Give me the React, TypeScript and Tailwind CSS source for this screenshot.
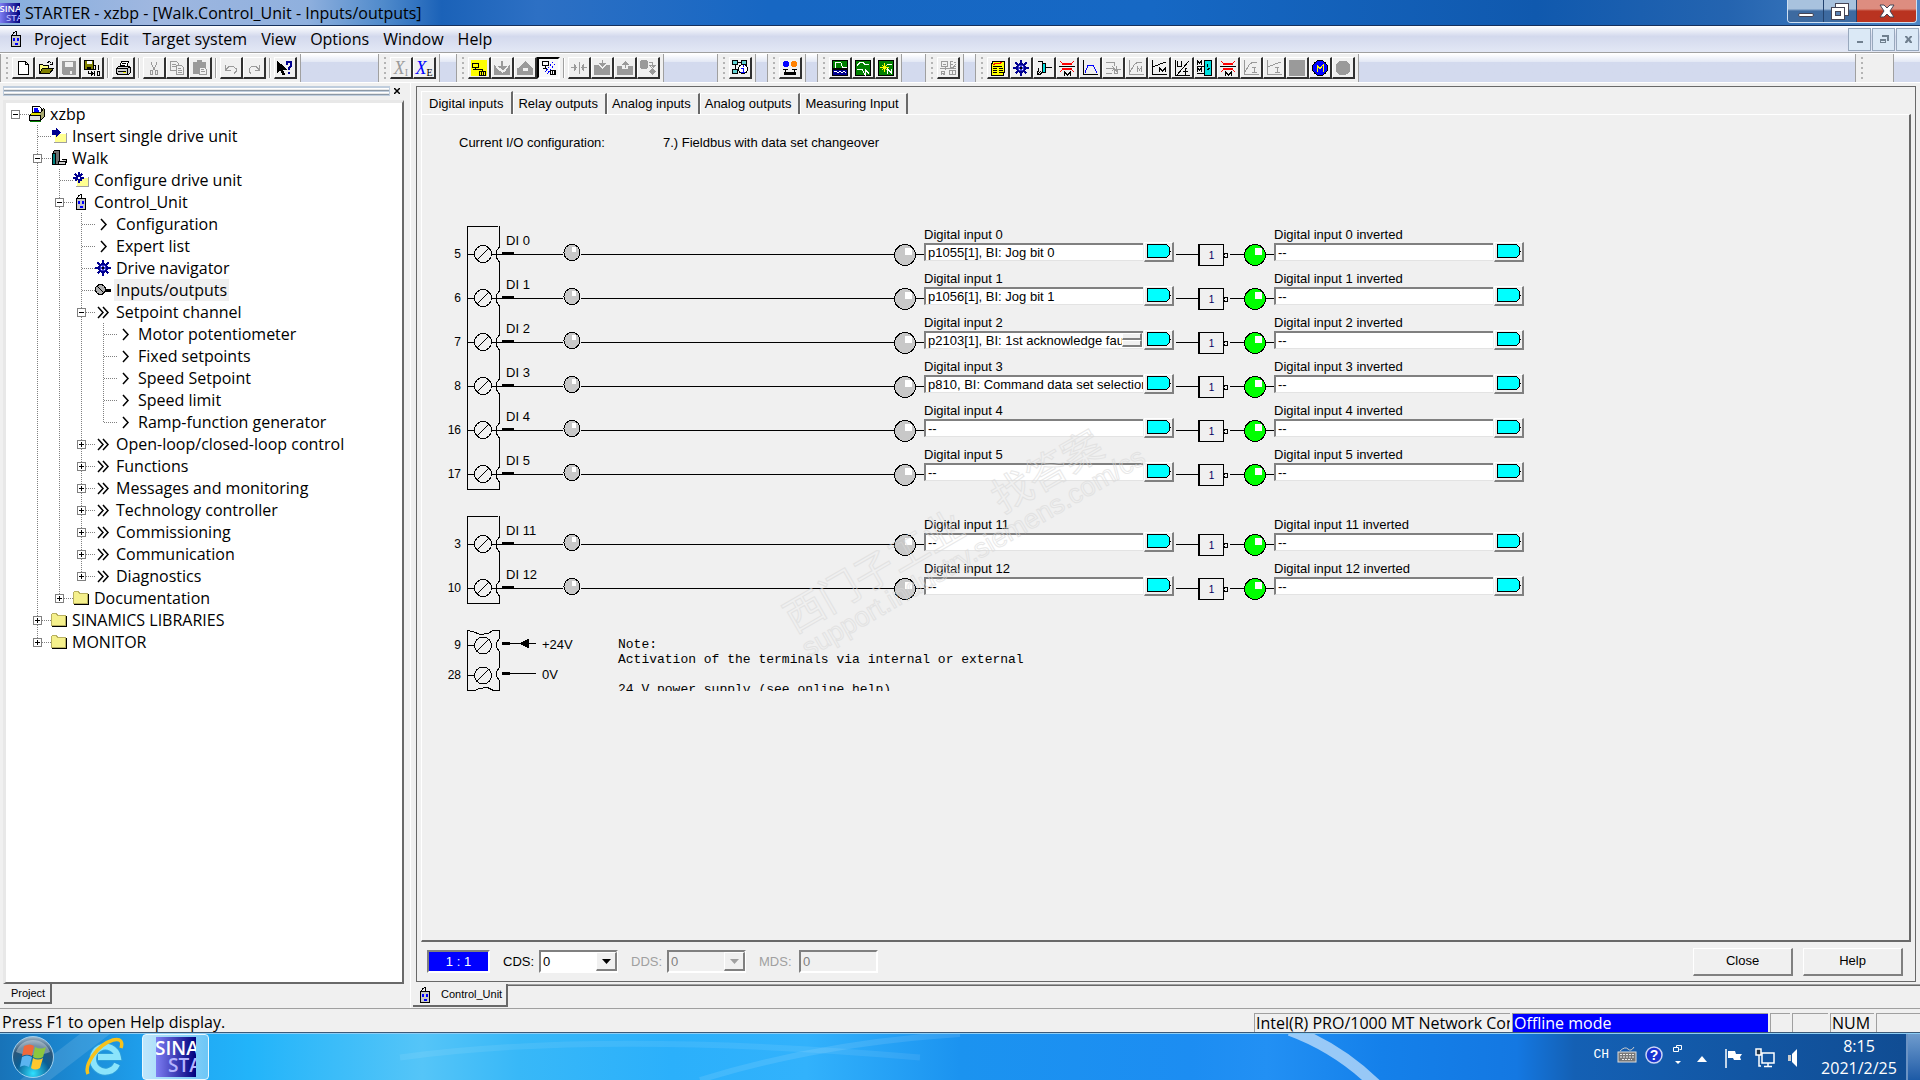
import React from 'react';

type IconProps = { children: React.ReactNode; className?: string };

const Icon: React.FC<IconProps> = ({ children, className = 'w-4 h-4' }) => (
  <svg className={`${className} shrink-0`} viewBox="0 0 16 16" fill="none" stroke="#000" strokeWidth="1" shapeRendering="crispEdges" aria-hidden="true">
    {children}
  </svg>
);

const G = '#9a9a9a';

const icons: Record<string, React.ReactNode> = {
  new: <path d="M3.500 1.500h7l3 3v10h-10zM10.500 1.500v3h3" fill="#fff" />,
  open: (
    <>
      <path d="M1.500 13.500v-9h3l1 1h5v3" fill="#ffff80" />
      <path d="M1.500 13.500l3-5h11l-4 5z" fill="#808000" />
      <path d="M9.500 2.500l2-1 2 2M14.500 1.500v3h-3" />
    </>
  ),
  save: (
    <>
      <path d="M1.500 1.500h13v13h-12l-1-1z" fill={G} stroke={G} />
      <path d="M4 2h8v5H4zM9 11h2v3H9z" fill="#f0f0f0" stroke="none" />
    </>
  ),
  saveBin: (
    <>
      <path d="M.5.500h9v9h-9z" fill="#808000" />
      <path d="M3 1h5v3H3z" fill="#fff" stroke="none" />
      <path d="M3 7h4v2H3z" fill="#000" stroke="none" />
      <path d="M9.500 5.500h2v4h-2zM14.500 5v5M4.500 11v2h4M7 11.500l2 2-2 2M10.500 11v5M13.500 11.500h2v4h-2z" />
    </>
  ),
  print: (
    <>
      <path d="M4.500 7.500l2-6h7l-2 6z" fill="#fff" />
      <path d="M1.500 8.500l2-2h10l2 1v5l-2 2h-11l-1-2z" fill="#d0d0d0" />
      <path d="M1.500 8.500h11l2-2M12.500 8.500v5M3 11.500h8M7 3.500h4M6 5.500h4" />
      <path d="M8 12h3v1H8z" fill="#ee0" stroke="none" />
    </>
  ),
  cut: <path d="M5.500 1.500v3l4 6M10.500 1.500v3l-4 6M4.500 10.500h2v4h-2zM9.500 10.500h2v4h-2z" stroke={G} />,
  copy: (
    <>
      <path d="M1.500 1.500h6l2 2v7h-8zM3 4.500h4M3 6.500h5" stroke={G} />
      <path d="M7.500 5.500h5l2 2v7h-7zM9 8.500h3M9 10.500h4M9 12.500h4" stroke={G} fill="#f0f0f0" />
    </>
  ),
  paste: (
    <>
      <path d="M1.500 2.500h12v11h-12zM5.500.500h4v2h-4z" stroke={G} fill={G} />
      <path d="M7.500 7.500h5l2 2v5h-7zM9 9.500h3M9 11.500h4" stroke={G} fill="#f0f0f0" />
    </>
  ),
  undo: <path d="M2.500 5v5h5M3 9.500l3-3h4l3 2v3l-2 2" stroke={G} />,
  redo: <path d="M13.500 5v5h-5M13 9.500l-3-3h-4l-3 2v3l2 2" stroke={G} />,
  whats: (
    <>
      <path d="M.5 1.500v11l3-3 2 5h2l-2-5h4z" fill="#000" />
      <path d="M10 5V2h4v4l-2 2v2M12 12v2" stroke="#000090" strokeWidth="2" />
    </>
  ),
  yellowNet: (
    <>
      <path d="M0 0h16v16H0z" fill="#ff0" stroke="none" />
      <path d="M1.500 3.500h6v4h-6zM4.500 8v2M2 9.500h9v2M8.500 11.500h6v4h-6zM10.500 11v5M12.500 11v5" />
    </>
  ),
  down: <path d="M.5 6v8.500h15v-9l-4 6-3 2-4-3zM7.500 1v5M8.500 1v5M5 6.500h7l-3 3z" stroke={G} fill={G} />,
  up: <path d="M.5 8v6.500h15v-6.500M2.500 7.500l6-6 6 6h-3v4h-6v-4z" stroke={G} fill={G} />,
  netSlash: (
    <>
      <path d="M1.500 1.500h6v4h-6zM4.500 6v2M2 8.500h4M9.500 10.500h5v4h-5zM11.500 10v5M13.500 10v5" />
      <path d="M12 2l-8 10M14 4l-8 10" stroke="#00f" strokeDasharray="2 1" />
    </>
  ),
  merge: <path d="M8 2v12M0 7.500h6M10 7.500h6M3.500 5l2 2.500-2 2.500zM12.500 5l-2 2.500 2 2.500z" stroke={G} fill={G} />,
  boxDown: <path d="M.5 5.500h4l4 4 4-4h3v9h-15zM8 0v5M5.500 3.500h6l-3 3z" stroke={G} fill={G} />,
  boxUp: <path d="M.5 6.500h4v3h7v-3h4v8h-15zM8 8V2M5.500 4.500h6l-3-3z" stroke={G} fill={G} />,
  transfer: (
    <>
      <path d="M1.500.500h5l1 1v6l-1 1h-5l-1-1v-6zM12.500 8.500l3 3-3 3-3-3z" stroke={G} fill={G} />
      <path d="M9 2.500h3.500v4M10 5.500h5l-2.500 3z" stroke={G} fill="none" />
    </>
  ),
  info: (
    <>
      <path d="M.5.500h5v4h-5zM9.500.500h5v4h-5zM.5 9.500h5v4h-5zM3.500 5v4M6 2.500h3" fill="#60d0d0" />
      <circle cx="11" cy="9" r="4.500" fill="#fff" />
      <path d="M11 5v2M9 8.500h3M11 8v4M9 12.500h4" stroke="#00f" />
    </>
  ),
  users: (
    <>
      <circle cx="4" cy="4" r="3" fill="#00f" stroke="none" />
      <circle cx="12" cy="4" r="3" fill="#ff8000" stroke="none" />
      <path d="M1 9.500h5M10 9.500h5M3.500 9v3M12.500 9v3" />
      <path d="M2 12h12v3H2z" fill="#000" stroke="none" />
    </>
  ),
  scope1: (
    <>
      <path d="M.5.500h15v8h-15z" fill="#008000" />
      <path d="M.5 9.500h15v6h-15z" fill="#000090" />
      <path d="M3.500 8v-5l2-1h3l2 5h4M2 12l2-1 2 2 2-2 2 2 2-2 2 2" stroke="#fff" />
    </>
  ),
  scope2: (
    <>
      <path d="M.5.500h15v15h-15z" fill="#008000" />
      <path d="M2 5.500l3-3h3l2 2h4M2 9.500h5l3 5v-5l4 4" stroke="#fff" />
    </>
  ),
  scope3: (
    <>
      <path d="M.5.500h15v15h-15z" fill="#008000" />
      <path d="M2 7.500h9M6.500 3v9M4 5l6 6M10 4l-6 6" stroke="#ff0" />
      <path d="M9.500 14v-5l4 4v-4M9 4h5" stroke="#fff" />
    </>
  ),
  device: (
    <path d="M1.500 1.500h6v5h-6zM3 4h3M10 1.500h3M10.500 2v5h3M10 4.500h3M14 2h2v2l-2 2h2M0 8.500h16M5 7v3M1.500 15v-4h3v2h-3l3 2M9.500 10.500h6v4h-6zM12.500 10v5" stroke={G} />
  ),
  list: (
    <>
      <path d="M1.500 3.500h12v12h-12z" fill="#ff0" />
      <path d="M2.500 3v-2h12v12" fill="#ff0" />
      <path d="M3 6.500h9M3 8.500h4M9 8.500h4M3 10.500h4M9 10.500h4M3 12.500h4M9 12.500h4" />
      <path d="M3 5l3-2 3 1 3-2" stroke="#f00" />
    </>
  ),
  wheel: (
    <>
      <path d="M8 0v16M0 8h16M2.500 2.500l11 11M13.500 2.500l-11 11" stroke="#000090" strokeWidth="2" />
      <circle cx="8" cy="8" r="4" fill="#3838d0" stroke="#000090" strokeWidth="2" />
      <path d="M6 6h1v1H6zM9 6h1v1H9zM6 9h1v1H6zM9 9h1v1H9z" fill="#fff" stroke="none" />
      <circle cx="8" cy="8" r="1" fill="#000" stroke="none" />
    </>
  ),
  loop: (
    <>
      <path d="M6.500 3.500h3v9h-3z" fill="#00e0e0" />
      <path d="M9 7.500h7M2 1.500h4v2M6.500 12l-3 3M1 15l4-4M1.500 11v3h3M2.500 8v4" />
    </>
  ),
  limit: (
    <>
      <path d="M3 4h10M3 9h10" stroke="#f00" strokeWidth="2" />
      <path d="M1 1l2 2M15 1l-2 2M1 12l2-2M15 12l-2-2" stroke="#f00" />
      <path d="M0 6.500h16M5.500 16v-4l3 3 3-3v4" />
    </>
  ),
  curve: (
    <>
      <path d="M1.500 0v14.500H16" />
      <path d="M3 12.500l3-7h5l4 7" stroke="#00f" />
    </>
  ),
  setp: <path d="M1 2.500h8v3M1 8.500h8M7 6l2 2.500-2 2.500M11 6v6M9 9.500h7M1 13.500h6M9.500 10.500h3v3h-3z" stroke={G} />,
  rampM: <path d="M1.500 0v14.500H16M2 12l4-7 4-3h4M9.500 12v-5l2 3 2-3v5" stroke={G} />,
  lineM: <path d="M1.500 0v14.500H16M2 7l7-3 6-2M8.500 12v-4l3 3 3-3v4" />,
  uf: <path d="M1.500 0v15.500H16M3.500 1v5h4v-5M3 15L15 1M13 8.500h-2v7M9 11.500h5" />,
  motor: (
    <>
      <path d="M7.500.500h7v15h-7z" fill="#00e0e0" />
      <path d="M0 6.500h7M0 13.500h7M.5 5v-4l2 2 2-2v4M.5 12v-4l2 2 2-2v4M10.500 4v3M10 10l3-2" />
    </>
  ),
  rampI: <path d="M1.500 0v14.500H16M2 12l4-7 4-3h4M9 7.500h4M11.500 7v5M9 12.500h5" stroke={G} />,
  lineI: <path d="M1.500 0v14.500H16M2 7l7-3 6-2M9 7.500h4M11.500 7v5M9 12.500h5" stroke={G} />,
  stop: <path d="M0 0h16v16H0z" fill={G} stroke="none" />,
  motorM: (
    <>
      <circle cx="8" cy="8" r="7.500" fill="#00f" />
      <path d="M5 12V5l3 4 3-4v7" stroke="#ff0" />
    </>
  ),
  dot: <circle cx="8" cy="8" r="7.500" fill={G} stroke="none" />,
  // tree
  unit: (
    <>
      <path d="M3.500 4.500h9v11h-9z" fill="#c8c8c8" />
      <path d="M4.500 4l1-2 3-2v4" />
      <path d="M5 7h2v3H5zM9 7h2v3H9zM7 12h3v2H7z" fill="#00f" stroke="none" />
    </>
  ),
  project: (
    <>
      <path d="M3.500.500h7l2 2v5h-9z" fill="#fff" />
      <path d="M5 2.500h4M5 4.500h5" stroke="#00f" strokeWidth="2" />
      <path d="M.5 9.500l3-3h8l3-4 1 1v7l-4 4h-11z" fill="#a8a870" />
      <path d="M.5 9.500h11v5h-11z" fill="#e0e0e0" />
      <path d="M2 7h9v2H2z" fill="#dd0" stroke="none" />
      <path d="M1 15.500h11" stroke="#008000" />
    </>
  ),
  insert: (
    <>
      <path d="M4 6h11v8H4z" fill="#ffff90" stroke="none" />
      <path d="M3 14.500h13M15.500 5v10" stroke="#a0a0a0" />
      <path d="M1 2h4V0l5 4.500L5 9V7H1z" fill="#000090" stroke="none" />
    </>
  ),
  walk: (
    <>
      <path d="M1.500 3.500l2-3h5v12l-2 2h-5z" fill="#707070" />
      <path d="M1.500 3.500h3v11h-3z" fill="#008080" />
      <path d="M7.500 11.500h7v3h-7zM10.500 9.500h5v3" fill="#d0d0d0" />
    </>
  ),
  configure: (
    <>
      <path d="M4 6h11v8H4z" fill="#ffff90" stroke="none" />
      <path d="M3 14.500h13M15.500 5v10" stroke="#a0a0a0" />
      <path d="M5.500 0v11M0 5.500h11M2 2l7 7M9 2l-7 7" stroke="#000090" strokeWidth="2" />
      <path d="M5 5h1v1H5z" fill="#fff" stroke="#fff" />
    </>
  ),
  io: (
    <>
      <circle cx="5.500" cy="7.500" r="5" fill="#b0b0b0" />
      <path d="M2 4l7 7" stroke="#000" />
      <path d="M11 8h5" strokeWidth="3" />
    </>
  ),
  chev: <path d="M6 3l5 5.500L6 14" strokeWidth="1.500" shapeRendering="auto" />,
  chev2: <path d="M3 3l5 5.500L3 14M8 3l5 5.500L8 14" strokeWidth="1.500" shapeRendering="auto" />,
  folder: (
    <>
      <path d="M.5 13.500v-11l1-1h4l1 2h8v10z" fill="#f5f08c" stroke="#b8b060" />
      <path d="M1 14.500h15M15.500 4v11" stroke="#000" />
    </>
  ),
};

/* ---------- title + menu ---------- */

const StarterLogo: React.FC<{ className: string }> = ({ className }) => (
  <svg className={className} viewBox="0 0 40 40" aria-hidden="true">
    <defs>
      <linearGradient id="logo" x1="0" x2="1">
        <stop offset="0" stopColor="#7d7df2" />
        <stop offset="1" stopColor="#00007c" />
      </linearGradient>
    </defs>
    <rect width="40" height="40" fill="url(#logo)" />
    <text x="-1" y="18" fontFamily="Open Sans, sans-serif" fontSize="19" fontWeight="600" fill="#fff">SINA</text>
    <text x="12" y="35" fontFamily="Open Sans, sans-serif" fontSize="19" fontWeight="600" fill="#b4b4ff">STA</text>
  </svg>
);

const TitleBar: React.FC = () => (
  <header className="flex h-[26px] shrink-0 justify-between overflow-hidden border-b border-[#16305c] bg-[linear-gradient(90deg,#86aede_0%,#9fb7e0_8%,#8fb0de_16%,#4f8acb_20%,#1b62b8_23%,#2d70c4_28%,#1767c3_40%,#1668c4_60%,#1059ae_80%,#2464b0_90%,#4d86c6_100%)]">
    <div className="flex items-center gap-[5px] pr-2">
      <StarterLogo className="h-5 w-5" />
      <h1 className="text-base font-normal whitespace-nowrap text-black">STARTER - xzbp - [Walk.Control_Unit - Inputs/outputs]</h1>
    </div>
    <div className="mr-[3px] flex h-[23px] overflow-hidden rounded-b border border-t-0 border-[#cfe0f2]">
      <button aria-label="Minimize" className="flex w-9 items-center justify-center border-r border-[#22426e] bg-linear-to-b from-[#a8c2de] from-40% to-[#3d6aa0] to-50%">
        <span className="mt-2 h-1 w-4 rounded-sm border border-[#445] bg-white" />
      </button>
      <button aria-label="Restore" className="flex w-[33px] items-center justify-center border-r border-[#22426e] bg-linear-to-b from-[#a8c2de] from-40% to-[#3d6aa0] to-50%">
        <svg className="h-[17px] w-[18px]" viewBox="0 0 18 17" shapeRendering="crispEdges" aria-hidden="true">
          <path d="M4.500.500h13v12h-13z" fill="#fff" stroke="#445" />
          <path d="M.5 4.500h13v12H.5z" fill="#fff" stroke="#445" />
          <path d="M4.500 8.500h5v4h-5z" fill="#5b83b4" stroke="#445" />
        </svg>
      </button>
      <button aria-label="Close window" className="flex w-[59px] items-center justify-center bg-linear-to-b from-[#dd8d80] from-40% to-[#b93320] to-50%">
        <svg className="h-[14px] w-[16px]" viewBox="0 0 16 14" aria-hidden="true">
          <path d="M1 1h4l3 3 3-3h4l-4 6 4 6h-4l-3-3-3 3H1l4-6z" fill="#fff" stroke="#445" />
        </svg>
      </button>
    </div>
  </header>
);

const menus = ['Project', 'Edit', 'Target system', 'View', 'Options', 'Window', 'Help'];

const MenuBar: React.FC = () => (
  <div className="flex h-[27px] shrink-0 items-center justify-between border-b border-[#a0a0a0] bg-linear-to-b from-white via-[#d3d9ed] via-40% to-[#e3e8f5]">
    <nav className="flex items-center pl-2">
      <Icon className="mr-[3px] h-4 w-4">{icons.unit}</Icon>
      {menus.map((m) => (
        <button key={m} className="px-[7px] text-base leading-6">{m}</button>
      ))}
    </nav>
    <div className="mr-px flex gap-px">
      {[
        { name: 'Minimize document', d: 'M5 10h6v2H5z' },
        { name: 'Restore document', d: 'M6 4h7v6h-2V6H6zM4 8h6v4H4zM5 10v1h4v-1z' },
        { name: 'Close document', d: 'M5 5h2l1.500 2L10 5h2v1l-2 2 2 3v1h-2l-1.500-2L7 12H5v-1l2-3-2-2z' },
      ].map((b) => (
        <button key={b.name} aria-label={b.name} className="flex h-[23px] w-[23px] items-center justify-center border border-[#98a8bd] bg-[#dbe9f6]">
          <svg className="h-4 w-4" viewBox="0 0 16 16" fill="#70808f" fillRule="evenodd" aria-hidden="true">
            <path d={b.d} />
          </svg>
        </button>
      ))}
    </div>
  </div>
);

/* ---------- toolbar ---------- */

const Group: React.FC<{ items: string[]; className?: string }> = ({ items, className = '' }) => (
  <div className={`flex h-full shrink-0 items-center border-r border-l border-r-[#a0a0a0] border-l-[#a0a0a0] bg-[#f0f0f0] pr-[3px] pl-[5px] ${className}`}>
    <div className="mr-1 flex w-[2px] flex-col gap-[3px]">
      {[0, 1, 2, 3, 4].map((n) => (
        <span key={n} className="h-[2px] w-[2px] bg-[#b4b4b4]" />
      ))}
    </div>
    {items.map((name, i) =>
      name === '|' ? (
        <span key={i} className="mx-[3px] h-5 w-[2px] border-l border-[#a0a0a0] bg-white" />
      ) : (
        <button
          key={i}
          aria-label={name}
          className={
            name === 'netSlash'
              ? 'flex h-[22px] w-[23px] items-center justify-center border-2 border-t-black border-r-white border-b-white border-l-black bg-[#f8f8f8]'
              : 'flex h-[22px] w-[23px] items-center justify-center border-t border-r-2 border-b-2 border-l border-t-white border-r-[#303030] border-b-[#303030] border-l-white bg-[#f0f0f0]'
          }
        >
          {name === 'xi' || name === 'xe' ? (
            <span className={`font-['Liberation_Serif'] text-lg leading-4 italic ${name === 'xi' ? 'text-[#9a9a9a]' : 'text-[#0000ff]'}`}>
              X<sub className={`text-[10px] not-italic ${name === 'xi' ? 'text-[#9a9a9a]' : 'text-black'}`}>{name === 'xi' ? 'I' : 'E'}</sub>
            </span>
          ) : (
            <Icon>{icons[name]}</Icon>
          )}
        </button>
      )
    )}
  </div>
);

const Toolbar: React.FC = () => (
  <div className="flex h-[30px] shrink-0 overflow-hidden border-t border-b border-white bg-linear-to-b from-white from-0% via-[#e3e8f5] via-28% to-[#d3daee] to-30%">
    <Group items={['new', 'open', 'save', 'saveBin', '|', 'print', '|', 'cut', 'copy', 'paste', '|', 'undo', 'redo', '|', 'whats']} />
    <Group className="ml-[77px]" items={['xi', 'xe']} />
    <Group className="ml-4" items={['yellowNet', 'down', 'up', 'netSlash', '|', 'merge', 'boxDown', 'boxUp', 'transfer']} />
    <Group className="ml-[53px]" items={['info']} />
    <Group className="ml-[11px]" items={['users']} />
    <Group className="ml-[11px]" items={['scope1', 'scope2', 'scope3']} />
    <Group className="ml-[23px]" items={['device']} />
    <Group
      className="ml-[11px]"
      items={['list', 'wheel', 'loop', 'limit', 'curve', 'setp', 'rampM', 'lineM', 'uf', 'motor', 'limit', 'rampI', 'lineI', 'stop', 'motorM', 'dot']}
    />
    <Group className="mr-[26px] ml-auto w-[39px]" items={[]} />
  </div>
);

/* ---------- project tree ---------- */

interface TreeNode {
  level: number;
  label: string;
  icon: string;
  box?: '+' | '-';
  selected?: boolean;
}

const tree: TreeNode[] = [
  { level: 0, label: 'xzbp', icon: 'project', box: '-' },
  { level: 1, label: 'Insert single drive unit', icon: 'insert' },
  { level: 1, label: 'Walk', icon: 'walk', box: '-' },
  { level: 2, label: 'Configure drive unit', icon: 'configure' },
  { level: 2, label: 'Control_Unit', icon: 'unit', box: '-' },
  { level: 3, label: 'Configuration', icon: 'chev' },
  { level: 3, label: 'Expert list', icon: 'chev' },
  { level: 3, label: 'Drive navigator', icon: 'wheel' },
  { level: 3, label: 'Inputs/outputs', icon: 'io', selected: true },
  { level: 3, label: 'Setpoint channel', icon: 'chev2', box: '-' },
  { level: 4, label: 'Motor potentiometer', icon: 'chev' },
  { level: 4, label: 'Fixed setpoints', icon: 'chev' },
  { level: 4, label: 'Speed Setpoint', icon: 'chev' },
  { level: 4, label: 'Speed limit', icon: 'chev' },
  { level: 4, label: 'Ramp-function generator', icon: 'chev' },
  { level: 3, label: 'Open-loop/closed-loop control', icon: 'chev2', box: '+' },
  { level: 3, label: 'Functions', icon: 'chev2', box: '+' },
  { level: 3, label: 'Messages and monitoring', icon: 'chev2', box: '+' },
  { level: 3, label: 'Technology controller', icon: 'chev2', box: '+' },
  { level: 3, label: 'Commissioning', icon: 'chev2', box: '+' },
  { level: 3, label: 'Communication', icon: 'chev2', box: '+' },
  { level: 3, label: 'Diagnostics', icon: 'chev2', box: '+' },
  { level: 2, label: 'Documentation', icon: 'folder', box: '+' },
  { level: 1, label: 'SINAMICS LIBRARIES', icon: 'folder', box: '+' },
  { level: 1, label: 'MONITOR', icon: 'folder', box: '+' },
];

// true when another node of the same branch follows below this row
const continues = (row: number, level: number) => {
  for (let i = row + 1; i < tree.length; i++) {
    if (tree[i].level === level) return true;
    if (tree[i].level < level) return false;
  }
  return false;
};

const TreeRow: React.FC<{ node: TreeNode; row: number }> = ({ node, row }) => (
  <li className="flex h-[22px] items-center">
    {Array.from({ length: node.level + 1 }, (_, k) => {
      const own = k === node.level;
      const below = k > 0 && continues(row, k);
      return (
        <svg key={k} className="h-[22px] w-[22px] shrink-0 overflow-visible" viewBox="0 0 22 22" fill="none" stroke="#808080" shapeRendering="crispEdges" aria-hidden="true">
          {k > 0 && (own || below) && <path d={below ? 'M10.500 0v22' : 'M10.500 0v11'} strokeDasharray="1 1" />}
          {own && <path d="M11 11.500h13" strokeDasharray="1 1" />}
          {own && node.box && (
            <>
              <path d="M6.500 7.500h8v8h-8z" fill="#fff" />
              <path d={node.box === '+' ? 'M8 11.500h5M10.500 9v5' : 'M8 11.500h5'} stroke="#000" />
            </>
          )}
        </svg>
      );
    })}
    <Icon className="mr-[3px] ml-[2px] h-4 w-4">{icons[node.icon]}</Icon>
    <span className={`px-[2px] text-base leading-[22px] whitespace-nowrap ${node.selected ? 'bg-[#f0f0f0]' : ''}`}>{node.label}</span>
  </li>
);

const ProjectPanel: React.FC = () => (
  <aside className="mr-[6px] ml-[3px] flex w-[401px] shrink-0 flex-col pt-[3px] pb-1">
    <div className="flex h-[10px] items-center bg-[#f0f0f0]">
      <div className="flex h-full flex-1 flex-col justify-center gap-px bg-[#bfcddd] px-px">
        <span className="h-[3px] border-t border-b border-t-white border-b-[#8d99a6] bg-[#e8e8e8]" />
        <span className="h-[3px] border-t border-b border-t-white border-b-[#8d99a6] bg-[#e8e8e8]" />
      </div>
      <button aria-label="Close project panel" className="flex w-[14px] justify-center">
        <svg className="h-[6px] w-[6px]" viewBox="0 0 6 6" stroke="#000" strokeWidth="1.500" aria-hidden="true">
          <path d="M0 0l6 6M6 0L0 6" />
        </svg>
      </button>
    </div>
    <div className="mt-1 flex-1 border-t-[3px] border-r-2 border-b-2 border-l-[3px] border-t-[#e8e8e8] border-r-[#696969] border-b-[#696969] border-l-[#e8e8e8] bg-white text-black">
      <ul className="-ml-px">
        {tree.map((node, i) => (
          <TreeRow key={node.label} node={node} row={i} />
        ))}
      </ul>
    </div>
    <button className="ml-px h-5 w-12 border-r-2 border-b-2 border-[#696969] pl-[2px] font-['Liberation_Sans'] text-[11px]">Project</button>
  </aside>
);

/* ---------- I/O diagram ---------- */

const BTN = 'border-t border-l border-r-2 border-b-2 border-t-white border-l-white border-r-[#808080] border-b-[#808080] bg-[#f0f0f0]';

const Lamp: React.FC<{ color: string; small?: boolean }> = ({ color, small }) =>
  small ? (
    <svg className="h-11 w-[18px] shrink-0" viewBox="0 0 18 44" shapeRendering="crispEdges" aria-hidden="true">
      <circle cx="9" cy="26.500" r="8" fill={color} stroke="#000" />
      <path d="M9 21h4v5H9z" fill="#fff" />
    </svg>
  ) : (
    <svg className="h-11 w-[22px] shrink-0" viewBox="0 0 22 44" shapeRendering="crispEdges" aria-hidden="true">
      <circle cx="11" cy="29" r="10.500" fill={color} stroke="#000" />
      <path d="M11 22h7v7h-7z" fill="#fff" />
    </svg>
  );

const Wire: React.FC<{ className: string }> = ({ className }) => <div className={`mt-7 h-px shrink-0 bg-black ${className}`} />;

const Terminal: React.FC<{ first: boolean; last: boolean }> = ({ first, last }) => (
  <svg className="h-11 w-[33px] shrink-0" viewBox="0 0 33 44" fill="none" stroke="#000" shapeRendering="crispEdges" aria-hidden="true">
    <path d="M.5 0v44M32.500 0v21l-3 4v7l3 4v8M0 28.500h8M25 28.500h8" />
    <circle cx="16" cy="28" r="8.500" />
    <path d="M10 34l12-12" />
    {first && <path d="M0 .500h31" />}
    {last && <path d="M0 43.500h33" />}
  </svg>
);

const Field: React.FC<{ id: string; label: string; value: string; spin?: boolean }> = ({ id, label, value, spin }) => (
  <div className="flex shrink-0">
    <div className="w-[219px]">
      <label htmlFor={id} className="block h-[17px] text-[13px] leading-[17px] whitespace-nowrap">{label}</label>
      <div className="relative">
        <input
          id={id}
          defaultValue={value}
          className="block h-[18px] w-full border-t-2 border-b border-l-2 border-t-[#808080] border-b-[#e3e3e3] border-l-[#808080] bg-white pl-[2px] text-[13px] leading-[15px] outline-none"
        />
        {spin && (
          <div className="absolute top-[2px] right-px flex w-5 flex-col">
            <button aria-label="Previous" className={`h-[7px] ${BTN}`} />
            <button aria-label="Next" className={`h-[7px] ${BTN}`} />
          </div>
        )}
      </div>
    </div>
    <button aria-label={`Connect ${label}`} className={`mt-4 ml-px flex h-5 w-[30px] items-start pt-px pl-[2px] ${BTN}`}>
      <svg className="h-[14px] w-6" viewBox="0 0 24 14" shapeRendering="crispEdges" aria-hidden="true">
        <path d="M.5.500h19l3 3v7l-3 3H.500z" fill="#0ff" stroke="#000" />
        <path d="M23 7h1" stroke="#000" />
      </svg>
    </button>
  </div>
);

interface Channel {
  terminal: string;
  n: number;
  value: string;
  spin?: boolean;
}

const IoRow: React.FC<{ ch: Channel; first: boolean; last: boolean }> = ({ ch, first, last }) => (
  <div className="flex h-11">
    <span className="mt-[18px] w-[45px] shrink-0 pr-[6px] text-right text-xs leading-5">{ch.terminal}</span>
    <Terminal first={first} last={last} />
    <div className="w-[63px] shrink-0">
      <div className="h-[26px] pt-[5px] pl-[6px] text-[13px] leading-5">DI {ch.n}</div>
      <div className="ml-[2px] h-[2px] w-3 bg-black" />
      <div className="h-px bg-black" />
    </div>
    <Lamp small color="#c8c8c8" />
    <Wire className="w-[313px]" />
    <Lamp color="#c8c8c8" />
    <Wire className="w-2" />
    <Field id={`di${ch.n}`} label={`Digital input ${ch.n}`} value={ch.value} spin={ch.spin} />
    <Wire className="ml-[2px] w-[22px]" />
    <div className="mt-[18px] flex h-[22px] w-[26px] shrink-0 items-center justify-center border border-l-2 border-black text-[10px] text-[#000060]">1</div>
    <svg className="h-11 w-5 shrink-0" viewBox="0 0 20 44" fill="none" stroke="#000" shapeRendering="crispEdges" aria-hidden="true">
      <circle cx="2" cy="29.500" r="2" />
      <path d="M6 28.500h14" />
    </svg>
    <Lamp color="#00ff00" />
    <Wire className="w-2" />
    <Field id={`di${ch.n}inv`} label={`Digital input ${ch.n} inverted`} value="--" />
  </div>
);

const Block: React.FC<{ channels: Channel[] }> = ({ channels }) => (
  <div>
    {channels.map((ch, i) => (
      <IoRow key={ch.n} ch={ch} first={i === 0} last={i === channels.length - 1} />
    ))}
  </div>
);

const upper: Channel[] = [
  { terminal: '5', n: 0, value: 'p1055[1], BI: Jog bit 0' },
  { terminal: '6', n: 1, value: 'p1056[1], BI: Jog bit 1' },
  { terminal: '7', n: 2, value: 'p2103[1], BI: 1st acknowledge faults', spin: true },
  { terminal: '8', n: 3, value: 'p810, BI: Command data set selection' },
  { terminal: '16', n: 4, value: '--' },
  { terminal: '17', n: 5, value: '--' },
];

const lower: Channel[] = [
  { terminal: '3', n: 11, value: '--' },
  { terminal: '10', n: 12, value: '--' },
];

const PowerBlock: React.FC = () => (
  <div className="flex h-[61px] overflow-hidden">
    <div className="w-[45px] pr-[6px] text-right text-xs leading-[30px]">
      <div>9</div>
      <div>28</div>
    </div>
    <svg className="h-[61px] w-[70px]" viewBox="0 0 70 61" fill="none" stroke="#000" shapeRendering="crispEdges" aria-hidden="true">
      <path d="M.5 0v60M0 .500l6 1 7 3 8-1 5-3h6.500v8l-3 4v5l3 4v16l-3 4v5l3 4v10h-6l-6-3-8 1-5 2H0M0 15.500h8M0 45.500h8" />
      <circle cx="16" cy="15.500" r="8.500" />
      <circle cx="16" cy="45.500" r="8.500" />
      <path d="M10 21l12-12M10 51l12-12M35 13.500h34M35 43.500h34" />
      <path d="M35 12h8v3h-8zM35 42h8v3h-8zM52 13.500l10-5v10z" fill="#000" stroke="none" />
    </svg>
    <div className="w-[81px] pl-[5px] text-[13px] leading-[30px]">
      <div>+24V</div>
      <div>0V</div>
    </div>
    <p className="pt-[7px] font-['Liberation_Mono'] text-[13px] leading-[15px] whitespace-pre">
      {'Note:\nActivation of the terminals via internal or external\n\n24 V power supply (see online help)'}
    </p>
  </div>
);

const Watermark: React.FC = () => (
  <div className="pointer-events-none absolute top-[482px] left-[372px] origin-left -rotate-30 whitespace-nowrap text-transparent opacity-60 select-none" aria-hidden="true">
    <div className="font-['Noto_Sans_CJK_SC'] text-[40px] leading-10 [-webkit-text-stroke:1px_#dadada]">西门子工业　找答案</div>
    <div className="font-['Liberation_Sans'] text-[27px] leading-8 [-webkit-text-stroke:1px_#dadada]">support.industry.siemens.com/cs</div>
  </div>
);

const Tabs: React.FC = () => (
  <div className="flex items-end text-[13px]" role="tablist">
    <button role="tab" aria-selected="true" className="-mb-px h-6 border-t border-r-2 border-l border-t-white border-r-[#696969] border-l-white bg-[#f0f0f0] pr-2 pl-[7px]">
      Digital inputs
    </button>
    {['Relay outputs', 'Analog inputs', 'Analog outputs', 'Measuring Input'].map((t) => (
      <button key={t} role="tab" aria-selected="false" className="h-[21px] border-t border-r-2 border-l border-t-white border-r-[#696969] border-l-white pr-[7px] pl-1">
        {t}
      </button>
    ))}
  </div>
);

const Combo: React.FC<{ label: string; id: string; disabled?: boolean }> = ({ label, id, disabled }) => (
  <div className="flex items-center">
    <label htmlFor={id} className={`w-9 ${disabled ? 'text-[#a0a0a0]' : ''}`}>{label}</label>
    <div className="relative">
      <select
        id={id}
        disabled={disabled}
        className="block h-[23px] w-[79px] appearance-none border-2 border-t-[#808080] border-r-white border-b-white border-l-[#808080] bg-white pl-[2px] leading-4 text-black disabled:bg-[#f0f0f0] disabled:text-[#808080] disabled:opacity-100"
      >
        <option>0</option>
      </select>
      <span className={`pointer-events-none absolute top-[2px] right-px flex h-[19px] w-[21px] items-center justify-center ${BTN}`}>
        <svg className="h-[5px] w-[9px]" viewBox="0 0 9 5" fill={disabled ? '#a0a0a0' : '#000'} aria-hidden="true">
          <path d="M0 0h9L4.500 5z" />
        </svg>
      </span>
    </div>
  </div>
);

const Document: React.FC = () => (
  <main className="flex min-w-0 flex-1 flex-col border-l border-white pt-[3px] font-['Liberation_Sans'] text-black">
    <div className="mr-1 ml-[5px] flex flex-1 flex-col border border-[#696969] pt-1 pr-1 pl-1">
      <Tabs />
      <div className="relative flex-1 overflow-hidden border-t border-r-2 border-b-2 border-l border-t-white border-r-[#696969] border-b-[#696969] border-l-white">
        <div className="flex pt-5 pl-[37px] text-[13px] leading-4">
          <span className="w-[204px]">Current I/O configuration:</span>
          <span>7.) Fieldbus with data set changeover</span>
        </div>
        <div className="mt-[75px] flex flex-col gap-[26px]">
          <Block channels={upper} />
          <Block channels={lower} />
          <PowerBlock />
        </div>
        <Watermark />
      </div>
      <div className="flex h-[39px] items-center justify-between pr-2 pl-[6px] text-[13px]">
        <div className="flex items-center gap-[13px]">
          <span className="flex h-[23px] w-[63px] items-center justify-center border-2 border-t-[#808080] border-r-white border-b-white border-l-[#808080] bg-[#0000ff] text-white">1 : 1</span>
          <Combo label="CDS:" id="cds" />
          <Combo label="DDS:" id="dds" disabled />
          <div className="flex items-center text-[#a0a0a0]">
            <label htmlFor="mds" className="w-10">MDS:</label>
            <input id="mds" disabled defaultValue="0" className="h-[23px] w-[79px] border-2 border-t-[#808080] border-r-white border-b-white border-l-[#808080] bg-[#f0f0f0] pl-[2px] text-[#808080]" />
          </div>
        </div>
        <div className="flex gap-[10px]">
          <button className={`h-7 w-[100px] ${BTN}`}>Close</button>
          <button className={`h-7 w-[100px] ${BTN}`}>Help</button>
        </div>
      </div>
    </div>
    <div className="mt-[2px] flex h-6 items-start">
      <button className="ml-[2px] flex h-[23px] w-[95px] items-center gap-2 border-r-2 border-b-2 border-[#696969] pl-1">
        <Icon className="h-4 w-4">{icons.unit}</Icon>
        <span className="text-[11px]">Control_Unit</span>
      </button>
      <span className="h-[2px] flex-1 border-t border-b border-t-[#a0a0a0] border-b-[#696969]" />
    </div>
  </main>
);

/* ---------- status + taskbar ---------- */

const PANE = 'h-[19px] overflow-hidden border-t border-l border-[#a0a0a0] pl-px whitespace-nowrap';

const StatusBar: React.FC = () => (
  <footer className="flex h-[25px] shrink-0 items-end justify-between border-t border-b border-t-[#a0a0a0] border-b-[#3c5a78] text-base leading-[18px] text-black">
    <span className="pb-px pl-[2px]">Press F1 to open Help display.</span>
    <div className="flex gap-[2px]">
      <span className={`w-64 ${PANE}`}>Intel(R) PRO/1000 MT Network Connection</span>
      <span className={`w-64 bg-[#0000ff] text-white ${PANE}`}>Offline mode</span>
      <span className={`w-5 ${PANE}`} />
      <span className={`w-9 ${PANE}`} />
      <span className={`w-11 ${PANE}`}>NUM</span>
      <span className={`w-11 ${PANE}`} />
    </div>
  </footer>
);

const StartOrb: React.FC = () => (
  <svg className="h-[44px] w-[44px]" viewBox="0 0 44 44" aria-hidden="true">
    <defs>
      <radialGradient id="orb" cx=".5" cy=".9" r=".9">
        <stop offset="0" stopColor="#2fe0ff" />
        <stop offset=".45" stopColor="#0b5f96" />
        <stop offset=".75" stopColor="#2c5678" />
        <stop offset="1" stopColor="#a9bccb" />
      </radialGradient>
    </defs>
    <circle cx="22" cy="22" r="20.500" fill="url(#orb)" stroke="#9fd0ee" />
    <path d="M5 17a18 18 0 0134 0c-8 4-26 4-34 0z" fill="#fff" opacity=".35" />
    <path d="M13 11q6-3 10 0l-2 10q-5-3-10 0z" fill="#f0683a" />
    <path d="M24 12q6 3 11 0l-3 10q-5 3-10 0z" fill="#8cc63f" />
    <path d="M11 22q5-3 10 0l-3 10q-5-3-9 0z" fill="#5bb4f0" />
    <path d="M22 23q5 3 10 0l-3 10q-5 3-9 0z" fill="#fdc82f" />
  </svg>
);

const Explorer: React.FC = () => (
  <svg className="h-10 w-10" viewBox="0 0 40 40" fill="none" aria-hidden="true">
    <path d="M32 27a12.500 12.500 0 11.800-7H13" stroke="#2c9fdc" strokeWidth="8" />
    <path d="M32 27a12.500 12.500 0 11.800-7H13" stroke="#8be4fb" strokeWidth="6" />
    <path d="M3 37C-1 28 12 8 28 3c8-2 10 2 8 8" stroke="#f6c21c" strokeWidth="3.500" />
  </svg>
);

const Taskbar: React.FC = () => (
  <div className="relative flex h-[47px] shrink-0 items-center justify-between overflow-hidden border-t border-[#8ccdf5] bg-[linear-gradient(90deg,#1873b8_0%,#1b8ad4_4%,#1fa2f0_8%,#22b4fa_13%,#55c5f8_22%,#38b8f8_27%,#2bb0fb_35%,#32b2fc_42%,#1b93f0_50%,#1c8df2_62%,#2290f4_66%,#1480ea_72%,#1478e2_79%,#1460b4_82%,#104c92_100%)] text-white">
    <svg className="absolute inset-0 h-full w-full" viewBox="0 0 1920 47" preserveAspectRatio="none" fill="none" aria-hidden="true">
      <path d="M1290 -4q48 18 86 56" stroke="#cfe6fb" strokeWidth="12" opacity=".7" />
      <path d="M400 24q200-28 520 0" stroke="#fff" strokeWidth="6" opacity=".08" />
      <path d="M700 47q120-38 260-47" stroke="#fff" strokeWidth="6" opacity=".1" />
      <path d="M20 47l60-47h30l-60 47z" fill="#fff" opacity=".12" />
    </svg>
    <div className="relative flex h-full items-center">
      <button aria-label="Start" className="ml-[11px]"><StartOrb /></button>
      <button aria-label="Internet Explorer" className="ml-[30px]"><Explorer /></button>
      <button aria-label="STARTER" className="ml-[17px] flex h-[46px] w-[67px] items-center justify-center rounded-sm border border-[#e8f8ff] bg-linear-to-r from-[#bfe6fb] to-[#6cc6f6]">
        <StarterLogo className="h-10 w-10" />
      </button>
    </div>
    <div className="relative flex h-full items-center">
      <span className="mb-1 mr-2 font-['Liberation_Mono'] text-[13px]">CH</span>
      <svg className="mr-2 mb-1 h-5 w-5" viewBox="0 0 20 20" aria-hidden="true">
        <path d="M3 6q5-5 8-2t6-2" fill="none" stroke="#ccc" />
        <rect x="1" y="7" width="18" height="10" fill="#777" stroke="#ddd" />
        <path d="M3 9.500h14M3 12h14M5 14.500h10" stroke="#eee" strokeDasharray="2 1" />
      </svg>
      <svg className="mr-[10px] mb-1 h-[18px] w-[18px]" viewBox="0 0 18 18" aria-hidden="true">
        <circle cx="9" cy="9" r="8" fill="#1a33d0" stroke="#ccd4f4" strokeWidth="1.500" />
        <text x="9" y="14" textAnchor="middle" fontFamily="Liberation Sans, sans-serif" fontSize="14" fontWeight="700" fill="#fff">?</text>
      </svg>
      <svg className="mr-[14px] mb-1 h-5 w-[10px]" viewBox="0 0 10 20" fill="none" stroke="#fff" aria-hidden="true">
        <path d="M3.500 3V.500h5v4h-2M.5 2.500h5v4h-5z" />
        <path d="M2 16h6l-3 3z" fill="#fff" stroke="none" />
      </svg>
      <svg className="mt-1 mr-[18px] h-[6px] w-[10px]" viewBox="0 0 10 6" fill="#fff" aria-hidden="true"><path d="M0 6l5-6 5 6z" /></svg>
      <svg className="mt-[2px] mr-3 h-[19px] w-[18px]" viewBox="0 0 18 19" aria-hidden="true">
        <path d="M1 0v19" stroke="#fff" strokeWidth="1.500" />
        <path d="M3 2h7l1 3h6l-2 3 1 3H9L8 9H3z" fill="#fff" />
      </svg>
      <svg className="mt-[2px] mr-[13px] h-5 w-5" viewBox="0 0 20 20" fill="none" stroke="#fff" strokeWidth="1.500" aria-hidden="true">
        <path d="M7 5h12v10H7zM9 18.500h8M13 15v3M4 7v11h2" />
        <path d="M1 1h5v6H1z" fill="#234" />
      </svg>
      <svg className="mt-[2px] h-[18px] w-[11px]" viewBox="0 0 11 18" aria-hidden="true">
        <path d="M0 6h3v6H0z" fill="#ccc" />
        <path d="M4 5l5-5v18l-5-5z" fill="#fff" />
      </svg>
      <div className="mr-2 ml-[21px] w-[78px] text-center text-base leading-[22px]">
        <div>8:15</div>
        <div>2021/2/25</div>
      </div>
      <button aria-label="Show desktop" className="h-full w-[14px] border-l-2 border-[#6b93c4] bg-linear-to-b from-[#6f9ccd] to-[#1c5aa6]" />
    </div>
  </div>
);

export default function App() {
  return (
    <div className="flex min-h-screen flex-col bg-[#f0f0f0] font-['Open_Sans','Noto_Sans_CJK_SC',sans-serif]">
      <TitleBar />
      <MenuBar />
      <Toolbar />
      <div className="flex flex-1">
        <ProjectPanel />
        <Document />
      </div>
      <StatusBar />
      <Taskbar />
    </div>
  );
}
